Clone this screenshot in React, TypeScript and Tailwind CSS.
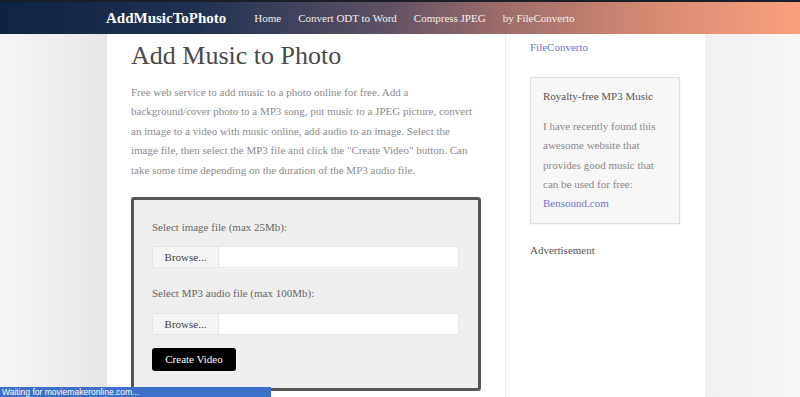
import React from "react";

const serif = { fontFamily: '"Liberation Serif", "Times New Roman", serif' };

function FileInput() {
  return (
    <div className="flex h-[22px] w-full border border-[#e6e6e6] bg-white rounded-[2px] overflow-hidden">
      <div className="w-[66px] flex items-center justify-center bg-[#f5f5f5] border-r border-[#e4e4e4] text-[11px] text-[#444]">
        Browse...
      </div>
      <div className="flex-1" />
    </div>
  );
}

export default function App() {
  return (
    <div className="w-[800px] h-[397px] overflow-hidden relative bg-white" style={serif}>
      <div className="h-[2px] bg-[#1c1f27]" />
      <header className="h-[32px] flex items-center bg-[linear-gradient(to_right,#0e2441_0%,#213251_25%,#5d5164_48%,#9a6b6a_62%,#d88b74_82%,#f9a07b_100%)] shadow-[0_1px_2px_rgba(0,0,0,0.15)]">
        <div className="pl-[106px] text-[15px] font-bold text-white leading-none">AddMusicToPhoto</div>
        <nav className="flex items-center gap-[17px] ml-[28px] text-[11px] text-[#f3f0ee] leading-none">
          <span>Home</span>
          <span>Convert ODT to Word</span>
          <span>Compress JPEG</span>
          <span>by FileConverto</span>
        </nav>
      </header>
      <div className="flex h-[363px]">
        <div className="w-[107px] bg-[linear-gradient(to_right,#f6f6f6,#e7e7e7)]" />
        <main className="w-[398px] bg-white pl-[24px] pr-[24px]">
          <h1 className="text-[26px] leading-[30px] text-[#4a4a4a] mt-[7px]">Add Music to Photo</h1>
          <p className="mt-[12px] text-[11px] leading-[19.4px] text-[#8c8c8c] whitespace-nowrap">
            Free web service to add music to a photo online for free. Add a<br />
            background/cover photo to a MP3 song, put music to a JPEG picture, convert<br />
            an image to a video with music online, add audio to an image. Select the<br />
            image file, then select the MP3 file and click the "Create Video" button. Can<br />
            take some time depending on the duration of the MP3 audio file.
          </p>
          <div className="mt-[17px] w-[350px] border-[3px] border-[#555555] rounded-[3px] bg-[#efefef] pt-[18px] pb-[17px] pl-[18px] pr-[19px]">
            <div className="text-[11px] leading-[19px] text-[#666]">Select image file (max 25Mb):</div>
            <div className="mt-[9px]">
              <FileInput />
            </div>
            <div className="mt-[16px] text-[11px] leading-[19px] text-[#666]">Select MP3 audio file (max 100Mb):</div>
            <div className="mt-[10px]">
              <FileInput />
            </div>
            <button className="mt-[13px] h-[23px] w-[84px] bg-black text-white text-[11px] rounded-[3px] flex items-center justify-center">
              Create Video
            </button>
          </div>
        </main>
        <aside className="w-[200px] bg-white border-l border-[#ececec] pl-[24px] pt-[4px]">
          <div className="text-[11px] leading-[19px] text-[#6f72d6]">FileConverto</div>
          <div className="mt-[20px] w-[150px] border border-[#dedede] bg-[#f7f7f7] shadow-[0_1px_2px_rgba(0,0,0,0.06)] px-[12px] pt-[9px] pb-[10px]">
            <div className="text-[11px] leading-[19px] text-[#555]">Royalty-free MP3 Music</div>
            <div className="mt-[11px] text-[11px] leading-[19.3px] text-[#8a8a8a]">
              I have recently found this awesome website that provides good music that can be used for free:
              <div className="text-[#6f72d6]">Bensound.com</div>
            </div>
          </div>
          <div className="mt-[17px] text-[11px] leading-[19px] text-[#555]">Advertisement</div>
        </aside>
        <div className="flex-1 bg-[linear-gradient(to_right,#f1f1f1,#f7f7f7)]" />
      </div>
      <div
        className="absolute left-0 bottom-0 w-[271px] h-[10px] bg-[#3d70c8] text-white text-[8.5px] leading-[10px] pl-[2px]"
        style={{ fontFamily: '"Liberation Sans", Arial, sans-serif' }}
      >
        Waiting for moviemakeronline.com...
      </div>
    </div>
  );
}
